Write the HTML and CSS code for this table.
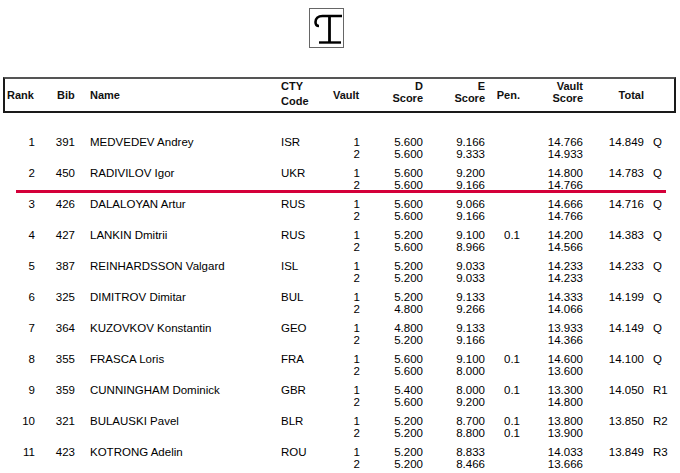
FILE: index.html
```html
<!DOCTYPE html>
<html>
<head>
<meta charset="utf-8">
<link rel="stylesheet" href="styles.css">
</head>
<body>
<div class="page">
  <div class="logo-wrap">
    <div class="logo">
      <svg width="33" height="38" viewBox="0 0 33 38">
        <path d="M32 7 H12.5 C8 7 5.5 9.5 5.5 13 C5.5 15.5 7 17 9 17" fill="none" stroke="#000" stroke-width="2.6" stroke-linecap="butt"/>
        <path d="M19.5 7 V33.5" fill="none" stroke="#000" stroke-width="2.8"/>
        <path d="M9 33.5 H31" fill="none" stroke="#000" stroke-width="2.4"/>
      </svg>
    </div>
  </div>

  <div class="thead">
    <div class="h rank-h">Rank</div>
    <div class="h bib-h">Bib</div>
    <div class="h name-h">Name</div>
    <div class="h two wide-lh">CTY<br>Code</div>
    <div class="h">Vault</div>
    <div class="h two right">D<br>Score</div>
    <div class="h two right">E<br>Score</div>
    <div class="h right">Pen.</div>
    <div class="h two right">Vault<br>Score</div>
    <div class="h right">Total</div>
    <div class="h"></div>
  </div>

  <div class="tbody">
    <div class="row">
      <div class="c r">1</div><div class="c r">391</div><div class="c name">MEDVEDEV Andrey</div><div class="c">ISR</div>
      <div class="c r st"><span>1</span><span>2</span></div>
      <div class="c r st"><span>5.600</span><span>5.600</span></div>
      <div class="c r st"><span>9.166</span><span>9.333</span></div>
      <div class="c r st"><span></span><span></span></div>
      <div class="c r st"><span>14.766</span><span>14.933</span></div>
      <div class="c r">14.849</div><div class="c q">Q</div>
    </div>
    <div class="row">
      <div class="c r">2</div><div class="c r">450</div><div class="c name">RADIVILOV Igor</div><div class="c">UKR</div>
      <div class="c r st"><span>1</span><span>2</span></div>
      <div class="c r st"><span>5.600</span><span>5.600</span></div>
      <div class="c r st"><span>9.200</span><span>9.166</span></div>
      <div class="c r st"><span></span><span></span></div>
      <div class="c r st"><span>14.800</span><span>14.766</span></div>
      <div class="c r">14.783</div><div class="c q">Q</div>
    </div>
    <div class="cutline"></div>
    <div class="row">
      <div class="c r">3</div><div class="c r">426</div><div class="c name">DALALOYAN Artur</div><div class="c">RUS</div>
      <div class="c r st"><span>1</span><span>2</span></div>
      <div class="c r st"><span>5.600</span><span>5.600</span></div>
      <div class="c r st"><span>9.066</span><span>9.166</span></div>
      <div class="c r st"><span></span><span></span></div>
      <div class="c r st"><span>14.666</span><span>14.766</span></div>
      <div class="c r">14.716</div><div class="c q">Q</div>
    </div>
    <div class="row">
      <div class="c r">4</div><div class="c r">427</div><div class="c name">LANKIN Dmitrii</div><div class="c">RUS</div>
      <div class="c r st"><span>1</span><span>2</span></div>
      <div class="c r st"><span>5.200</span><span>5.600</span></div>
      <div class="c r st"><span>9.100</span><span>8.966</span></div>
      <div class="c r st"><span>0.1</span><span></span></div>
      <div class="c r st"><span>14.200</span><span>14.566</span></div>
      <div class="c r">14.383</div><div class="c q">Q</div>
    </div>
    <div class="row">
      <div class="c r">5</div><div class="c r">387</div><div class="c name">REINHARDSSON Valgard</div><div class="c">ISL</div>
      <div class="c r st"><span>1</span><span>2</span></div>
      <div class="c r st"><span>5.200</span><span>5.200</span></div>
      <div class="c r st"><span>9.033</span><span>9.033</span></div>
      <div class="c r st"><span></span><span></span></div>
      <div class="c r st"><span>14.233</span><span>14.233</span></div>
      <div class="c r">14.233</div><div class="c q">Q</div>
    </div>
    <div class="row">
      <div class="c r">6</div><div class="c r">325</div><div class="c name">DIMITROV Dimitar</div><div class="c">BUL</div>
      <div class="c r st"><span>1</span><span>2</span></div>
      <div class="c r st"><span>5.200</span><span>4.800</span></div>
      <div class="c r st"><span>9.133</span><span>9.266</span></div>
      <div class="c r st"><span></span><span></span></div>
      <div class="c r st"><span>14.333</span><span>14.066</span></div>
      <div class="c r">14.199</div><div class="c q">Q</div>
    </div>
    <div class="row">
      <div class="c r">7</div><div class="c r">364</div><div class="c name">KUZOVKOV Konstantin</div><div class="c">GEO</div>
      <div class="c r st"><span>1</span><span>2</span></div>
      <div class="c r st"><span>4.800</span><span>5.200</span></div>
      <div class="c r st"><span>9.133</span><span>9.166</span></div>
      <div class="c r st"><span></span><span></span></div>
      <div class="c r st"><span>13.933</span><span>14.366</span></div>
      <div class="c r">14.149</div><div class="c q">Q</div>
    </div>
    <div class="row">
      <div class="c r">8</div><div class="c r">355</div><div class="c name">FRASCA Loris</div><div class="c">FRA</div>
      <div class="c r st"><span>1</span><span>2</span></div>
      <div class="c r st"><span>5.600</span><span>5.600</span></div>
      <div class="c r st"><span>9.100</span><span>8.000</span></div>
      <div class="c r st"><span>0.1</span><span></span></div>
      <div class="c r st"><span>14.600</span><span>13.600</span></div>
      <div class="c r">14.100</div><div class="c q">Q</div>
    </div>
    <div class="row">
      <div class="c r">9</div><div class="c r">359</div><div class="c name">CUNNINGHAM Dominick</div><div class="c">GBR</div>
      <div class="c r st"><span>1</span><span>2</span></div>
      <div class="c r st"><span>5.400</span><span>5.600</span></div>
      <div class="c r st"><span>8.000</span><span>9.200</span></div>
      <div class="c r st"><span>0.1</span><span></span></div>
      <div class="c r st"><span>13.300</span><span>14.800</span></div>
      <div class="c r">14.050</div><div class="c q">R1</div>
    </div>
    <div class="row">
      <div class="c r">10</div><div class="c r">321</div><div class="c name">BULAUSKI Pavel</div><div class="c">BLR</div>
      <div class="c r st"><span>1</span><span>2</span></div>
      <div class="c r st"><span>5.200</span><span>5.200</span></div>
      <div class="c r st"><span>8.700</span><span>8.800</span></div>
      <div class="c r st"><span>0.1</span><span>0.1</span></div>
      <div class="c r st"><span>13.800</span><span>13.900</span></div>
      <div class="c r">13.850</div><div class="c q">R2</div>
    </div>
    <div class="row">
      <div class="c r">11</div><div class="c r">423</div><div class="c name">KOTRONG Adelin</div><div class="c">ROU</div>
      <div class="c r st"><span>1</span><span>2</span></div>
      <div class="c r st"><span>5.200</span><span>5.200</span></div>
      <div class="c r st"><span>8.833</span><span>8.466</span></div>
      <div class="c r st"><span></span><span></span></div>
      <div class="c r st"><span>14.033</span><span>13.666</span></div>
      <div class="c r">13.849</div><div class="c q">R3</div>
    </div>
  </div>
</div>
</body>
</html>
```

FILE: styles.css
```css
* { box-sizing: border-box; }
html, body {
  margin: 0;
  padding: 0;
  background: #fff;
}
body {
  font-family: "Liberation Sans", Arial, sans-serif;
  font-size: 11px;
  color: #111;
}
.page {
  width: 680px;
  height: 473px;
  overflow: hidden;
}
.logo-wrap {
  display: flex;
  padding: 8px 0 0 309px;
}
.logo {
  width: 35px;
  height: 40px;
  border: 1px solid #666;
  display: flex;
}
.logo svg { display: block; }

.thead {
  margin: 29px 4px 0 3px;
  height: 36px;
  border: 2px solid #1a1a1a;
  border-top-color: #555;
  display: grid;
  grid-template-columns: 31px 40px 205px 52px 28px 63px 62px 35px 63px 61px 1fr;
  font-weight: bold;
}
.h {
  align-self: center;
  line-height: 12px;
  white-space: nowrap;
}
.h.two { align-self: start; padding-top: 1px; }
.h.wide-lh { line-height: 15px; padding-top: 0; }
.h.right { text-align: right; padding-right: 1px; }
.rank-h { padding-left: 2px; }
.bib-h { padding-left: 21px; }
.name-h { padding-left: 14px; }

.tbody {
  margin-top: 21px;
  font-size: 11.5px;
  color: #000;
}
.row {
  display: grid;
  grid-template-columns: 36px 40px 205px 52px 28px 63px 62px 35px 63px 61px 1fr;
  height: 31px;
  padding-top: 2px;
  line-height: 12px;
  white-space: nowrap;
}
.c.r { text-align: right; padding-right: 1px; }
.c.name { padding-left: 14px; }
.c.q { padding-left: 8px; }
.st span { display: block; height: 12px; }
.cutline {
  height: 3px;
  margin: -6px 14px 3px 16px;
  background: #d4003a;
}
```
